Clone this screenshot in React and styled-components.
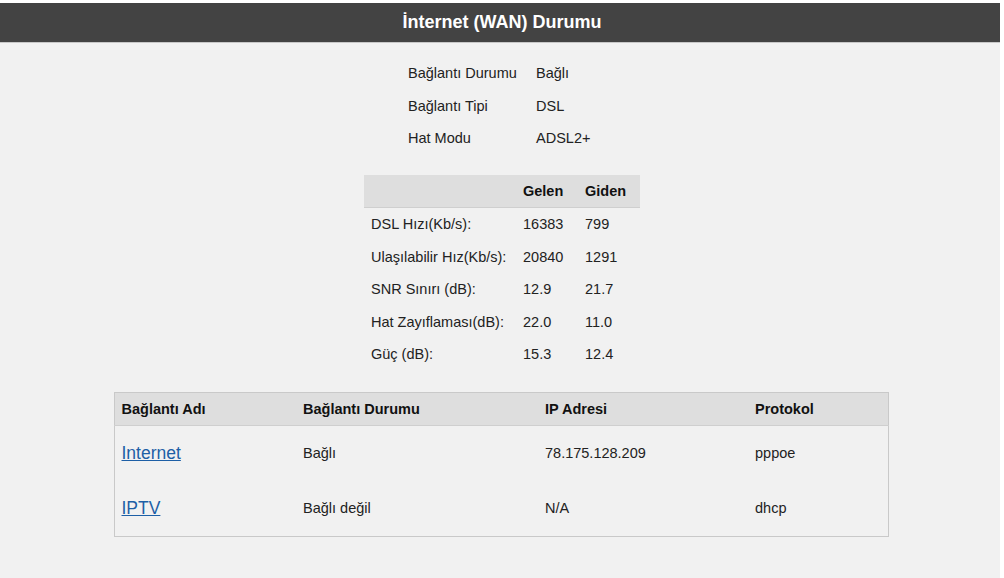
import React from 'react';
import styled, { createGlobalStyle } from 'styled-components';

const GlobalStyle = createGlobalStyle`
  html, body {
    margin: 0;
    padding: 0;
    background: #ffffff;
  }
  body {
    font-family: 'Liberation Sans', Arial, sans-serif;
    color: #222;
  }
`;

const Page = styled.div`
  margin-top: 3px;
  width: 1000px;
  min-height: 575px;
  background: #f1f1f1;
`;

const TitleBar = styled.div`
  height: 39px;
  background: #434343;
  border-bottom: 1px solid #c8c8c8;
  color: #fff;
  font-size: 18px;
  font-weight: bold;
  display: flex;
  align-items: center;
  justify-content: center;
  padding-left: 4px;
`;

const Content = styled.div`
  display: flex;
  flex-direction: column;
  align-items: center;
  padding-top: 14px;
  padding-left: 4px;
`;

const InfoGrid = styled.div`
  display: grid;
  grid-template-columns: 128px 60px;
  grid-auto-rows: 32.5px;
  align-items: center;
  font-size: 14.5px;
`;

const Table = styled.table`
  border-collapse: collapse;
  font-size: 14.5px;
  table-layout: fixed;
`;

const StatsTable = styled(Table)`
  width: 276px;
  margin-top: 20px;
`;

const HeadRow = styled.tr`
  background: #dedede;
  border-bottom: 1px solid #cfcfcf;
`;

const Th = styled.th`
  box-sizing: border-box;
  text-align: left;
  font-weight: bold;
  padding: 0 0 0 7px;
  height: 33px;
  width: ${p => p.$w}px;
  color: #111;
`;

const Td = styled.td`
  padding: 0 0 0 7px;
  height: ${p => p.$h || 32.5}px;
`;

const ConnTable = styled(Table)`
  width: 774px;
  margin-top: 21px;
  margin-left: -2px;
  border: 1px solid #c9c9c9;
`;

const Link = styled.a`
  color: #1d5fa6;
  font-size: 17.5px;
  text-decoration: underline;
  cursor: pointer;
`;

const info = [
  ['Bağlantı Durumu', 'Bağlı'],
  ['Bağlantı Tipi', 'DSL'],
  ['Hat Modu', 'ADSL2+'],
];

const stats = [
  ['DSL Hızı(Kb/s):', '16383', '799'],
  ['Ulaşılabilir Hız(Kb/s):', '20840', '1291'],
  ['SNR Sınırı (dB):', '12.9', '21.7'],
  ['Hat Zayıflaması(dB):', '22.0', '11.0'],
  ['Güç (dB):', '15.3', '12.4'],
];

const connections = [
  ['Internet', 'Bağlı', '78.175.128.209', 'pppoe'],
  ['IPTV', 'Bağlı değil', 'N/A', 'dhcp'],
];

export default function App() {
  return (
    <>
      <GlobalStyle />
      <Page>
        <TitleBar>İnternet (WAN) Durumu</TitleBar>
        <Content>
          <InfoGrid>
            {info.map(([k, v]) => (
              <React.Fragment key={k}>
                <span>{k}</span>
                <span>{v}</span>
              </React.Fragment>
            ))}
          </InfoGrid>

          <StatsTable>
            <thead>
              <HeadRow>
                <Th $w={152}></Th>
                <Th $w={62}>Gelen</Th>
                <Th $w={62}>Giden</Th>
              </HeadRow>
            </thead>
            <tbody>
              {stats.map(([k, a, b]) => (
                <tr key={k}>
                  <Td>{k}</Td>
                  <Td>{a}</Td>
                  <Td>{b}</Td>
                </tr>
              ))}
            </tbody>
          </StatsTable>

          <ConnTable>
            <thead>
              <HeadRow>
                <Th $w={182}>Bağlantı Adı</Th>
                <Th $w={242}>Bağlantı Durumu</Th>
                <Th $w={210}>IP Adresi</Th>
                <Th $w={140}>Protokol</Th>
              </HeadRow>
            </thead>
            <tbody>
              {connections.map(([name, status, ip, proto]) => (
                <tr key={name}>
                  <Td $h={55}><Link>{name}</Link></Td>
                  <Td $h={55}>{status}</Td>
                  <Td $h={55}>{ip}</Td>
                  <Td $h={55}>{proto}</Td>
                </tr>
              ))}
            </tbody>
          </ConnTable>
        </Content>
      </Page>
    </>
  );
}
